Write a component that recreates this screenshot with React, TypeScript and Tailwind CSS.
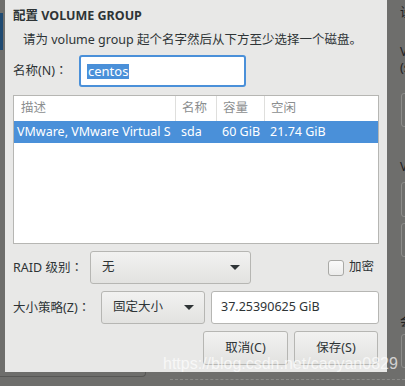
import React from 'react';

function Arrow() {
    return (
        <svg width="10" height="5" viewBox="0 0 10 5" className="shrink-0">
            <path d="M0 0 H10 L5 5 Z" fill="#2e3436" />
        </svg>
    );
}

// full-width colon, centred like the GTK label
function Colon() {
    return <span className="font-['Noto_Sans_CJK_JP',sans-serif]">：</span>;
}

function Dialog() {
    return (
        <div className="h-full w-[382px] shrink-0 overflow-hidden bg-[#e8e8e7] px-[8px]">
            {/* Header */}
            <div className="flex h-[32px] items-center font-bold text-[#2e3436]">
                配置 VOLUME GROUP
            </div>
            <div className="pl-[10px] leading-[16px]">
                请为 volume group 起个名字然后从下方至少选择一个磁盘。
            </div>

            {/* Name */}
            <div className="mt-[7px] flex h-[32px] items-center">
                <span className="w-[66px] shrink-0 whitespace-nowrap">名称(N)<Colon /></span>
                <div className="flex h-[32px] w-[167px] items-center rounded-[3px] border-2 border-[#4a90d9] bg-white pl-[6px]">
                    <span className="bg-[#4a90d9] px-px text-[13px] leading-[15px] text-white">centos</span>
                </div>
            </div>

            {/* Disk list */}
            <div className="mt-[8px] h-[149px] border border-[#b6b6b3] bg-white">
                <div className="grid h-[25px] grid-cols-[162px_41px_48px_1fr] items-center text-[#8b8e8f]">
                    <div className="flex h-full items-center border-r border-[#dfdfdd] pl-[7px]">描述</div>
                    <div className="flex h-full items-center border-r border-[#dfdfdd] pl-[6px]">名称</div>
                    <div className="flex h-full items-center border-r border-[#dfdfdd] pl-[6px]">容量</div>
                    <div className="flex h-full items-center pl-[6px]">空闲</div>
                </div>
                <div className="grid h-[22px] grid-cols-[162px_41px_48px_1fr] items-center bg-[#4a90d9] text-white">
                    <div className="overflow-hidden whitespace-nowrap pl-[3px]">VMware, VMware Virtual S</div>
                    <div className="pl-[5px]">sda</div>
                    <div className="whitespace-nowrap pl-[5px]">60 GiB</div>
                    <div className="pl-[5px]">21.74 GiB</div>
                </div>
            </div>

            {/* RAID */}
            <div className="mt-[7px] flex h-[33px] items-center">
                <span className="w-[77px] shrink-0 whitespace-nowrap">RAID 级别<Colon /></span>
                <div className="flex h-[33px] w-[161px] items-center justify-between rounded-[3px] border border-[#b6b6b3] bg-linear-to-b from-[#f2f2f1] to-[#e2e2e0] pl-[11px] pr-[10px]">
                    <span>无</span>
                    <Arrow />
                </div>
                <div className="ml-auto mr-[5px] flex items-center gap-[5px]">
                    <div className="h-[16px] w-[16px] rounded-[3px] border border-[#a9a9a6] bg-linear-to-b from-[#fafafa] to-[#ececeb]" />
                    <span>加密</span>
                </div>
            </div>

            {/* Size policy */}
            <div className="mt-[7px] flex h-[33px] items-center">
                <span className="w-[88px] shrink-0 whitespace-nowrap">大小策略(Z)<Colon /></span>
                <div className="flex h-[33px] w-[104px] items-center justify-between rounded-[3px] border border-[#b6b6b3] bg-linear-to-b from-[#f2f2f1] to-[#e2e2e0] pl-[11px] pr-[10px]">
                    <span>固定大小</span>
                    <Arrow />
                </div>
                <div className="ml-[6px] flex h-[33px] w-[168px] items-center rounded-[3px] border border-[#b6b6b3] bg-white pl-[9px]">
                    37.25390625 GiB
                </div>
            </div>

            {/* Actions */}
            <div className="mt-[7px] flex justify-end gap-[6px] pr-px">
                <button className="h-[34px] w-[85px] rounded-[3px] border border-[#b6b6b3] bg-linear-to-b from-[#f2f2f1] to-[#e2e2e0]">
                    取消(C)
                </button>
                <button className="h-[34px] w-[84px] rounded-[3px] border border-[#b6b6b3] bg-linear-to-b from-[#f2f2f1] to-[#e2e2e0]">
                    保存(S)
                </button>
            </div>
        </div>
    );
}

function BackdropRight() {
    // dimmed window underneath, only a sliver is visible
    return (
        <div className="flex-1 overflow-hidden pl-[13px] text-[#1f2223]">
            <div className="mt-[5px] whitespace-nowrap leading-[16px]">设备</div>
            <div className="mt-[23px] whitespace-nowrap leading-[16px]">VMware</div>
            <div className="whitespace-nowrap leading-[16px]">(sda)</div>
            <div className="ml-px mt-[17px] h-[34px] w-[40px] rounded-[3px] border border-[#8c8c8a]" />
            <div className="mt-[32px] whitespace-nowrap leading-[16px]">Volume</div>
            <div className="ml-px mt-[7px] h-[35px] w-[40px] rounded-[3px] border border-[#8c8c8a]" />
            <div className="ml-px mt-[6px] h-[34px] w-[40px] rounded-[3px] border border-[#8c8c8a]" />
            <div className="mt-[57px] whitespace-nowrap leading-[16px]">会</div>
            <div className="ml-px mt-[4px] h-[34px] w-[40px] rounded-[3px] border border-[#8c8c8a]" />
        </div>
    );
}

export default function App() {
    return (
        <div className="relative flex h-[386px] w-[405px] flex-col overflow-hidden bg-[#6e6e6c] font-['Noto_Sans','Noto_Sans_CJK_SC',sans-serif] text-[12.5px] text-[#2e3436]">
            <div className="flex h-[372px]">
                <div className="w-[5px] shrink-0 pt-[13px]">
                    <div className="h-[37px] w-[3px] bg-[#1f4a72]" />
                </div>
                <Dialog />
                <BackdropRight />
            </div>

            {/* Bottom sliver of the window behind */}
            <div className="flex flex-1 items-start">
                <div className="h-[5px] w-[146px] rounded-br-[4px] border-b border-r border-[#575755]" />
                <div className="ml-[24px] mt-[7px] flex-1 border-t border-dashed border-[#8a8a88]" />
            </div>

            {/* Watermark */}
            <div className="pointer-events-none absolute left-[163px] top-[355px] font-['Liberation_Sans',sans-serif] text-[16px] leading-[18px] text-white/70">
                https://blog.csdn.net/caoyan0829
            </div>
        </div>
    );
}
